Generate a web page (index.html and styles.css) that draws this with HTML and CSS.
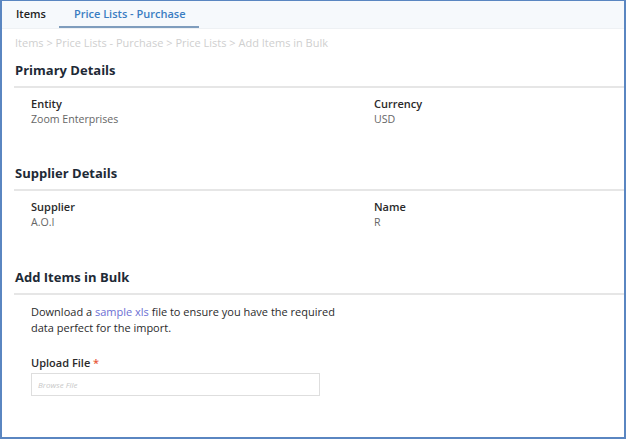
FILE: index.html
```html
<!DOCTYPE html>
<html>
<head>
<meta charset="utf-8">
<link rel="stylesheet" href="styles.css">
</head>
<body>
<div class="frame">
  <div class="tabs">
    <div class="tab">Items</div>
    <div class="tab active">Price Lists - Purchase</div>
  </div>
  <div class="crumbs">Items &gt; Price Lists - Purchase &gt; Price Lists &gt; Add Items in Bulk</div>

  <section class="section">
    <h2 class="heading">Primary Details</h2>
    <div class="fields">
      <div class="field"><div class="label">Entity</div><div class="value">Zoom Enterprises</div></div>
      <div class="field"><div class="label">Currency</div><div class="value">USD</div></div>
    </div>
  </section>

  <section class="section">
    <h2 class="heading">Supplier Details</h2>
    <div class="fields">
      <div class="field"><div class="label">Supplier</div><div class="value">A.O.I</div></div>
      <div class="field"><div class="label">Name</div><div class="value">R</div></div>
    </div>
  </section>

  <section class="section last">
    <h2 class="heading">Add Items in Bulk</h2>
    <div class="bulk">
      <p class="note">Download a <span class="link">sample xls</span> file to ensure you have the required data perfect for the import.</p>
      <div class="label upload">Upload File <span class="req">*</span></div>
      <div class="input">Browse File</div>
    </div>
  </section>
</div>
</body>
</html>
```
FILE: styles.css
```css
html, body { margin: 0; padding: 0; background: #fff; }
body { font-family: "Open Sans", "Noto Sans", sans-serif; color: #333; }
.frame {
  width: 626px; height: 439px; box-sizing: border-box;
  border: 2px solid #5a86c1; border-top-width: 1px;
  background: #fff; overflow: hidden;
}
.tabs {
  display: flex; height: 28px; background: #f6f9fc;
  border-bottom: 1px solid #eef1f4; box-sizing: border-box;
  padding-left: 12px;
}
.tab {
  font-size: 11px; font-weight: 600; color: #222; line-height: 26px;
  padding: 0 13px 0 2px;
}
.tab.active {
  color: #3a7dc2; border-bottom: 2px solid #7f9dbd; padding: 0 13px 0 15px;
}
.crumbs {
  font-size: 11px; color: #cfcfcf; line-height: 16px;
  margin: 6px 0 0 13px;
}
.section { margin-top: 10px; }
.section.last { margin-top: 11px; }
.heading {
  margin: 0 0 0 12px; padding: 0 0 7px 1px;
  font-size: 13px; font-weight: 700; color: #1e2a36; line-height: 18px;
  border-bottom: 2px solid #e6e6e6;
}
.fields { display: grid; grid-template-columns: 343px 1fr; padding: 8px 0 0 29px; height: 66px; box-sizing: border-box; }
.label { font-size: 11px; font-weight: 600; color: #2a2a2a; line-height: 15px; }
.value { font-size: 10.6px; color: #666; line-height: 15px; margin-top: 1px; }
.bulk { padding: 9px 0 0 29px; }
.note { margin: 0; width: 310px; font-size: 11px; line-height: 16px; color: #2b2b2b; }
.link { color: #6b6fd3; }
.upload { margin-top: 19px; }
.req { color: #e85a3a; }
.input {
  margin-top: 3px; width: 289px; height: 23px; box-sizing: border-box;
  border: 1px solid #dedede; font-size: 8px; font-style: italic; color: #c8c8c8;
  padding-left: 6px; line-height: 21px;
}
```
